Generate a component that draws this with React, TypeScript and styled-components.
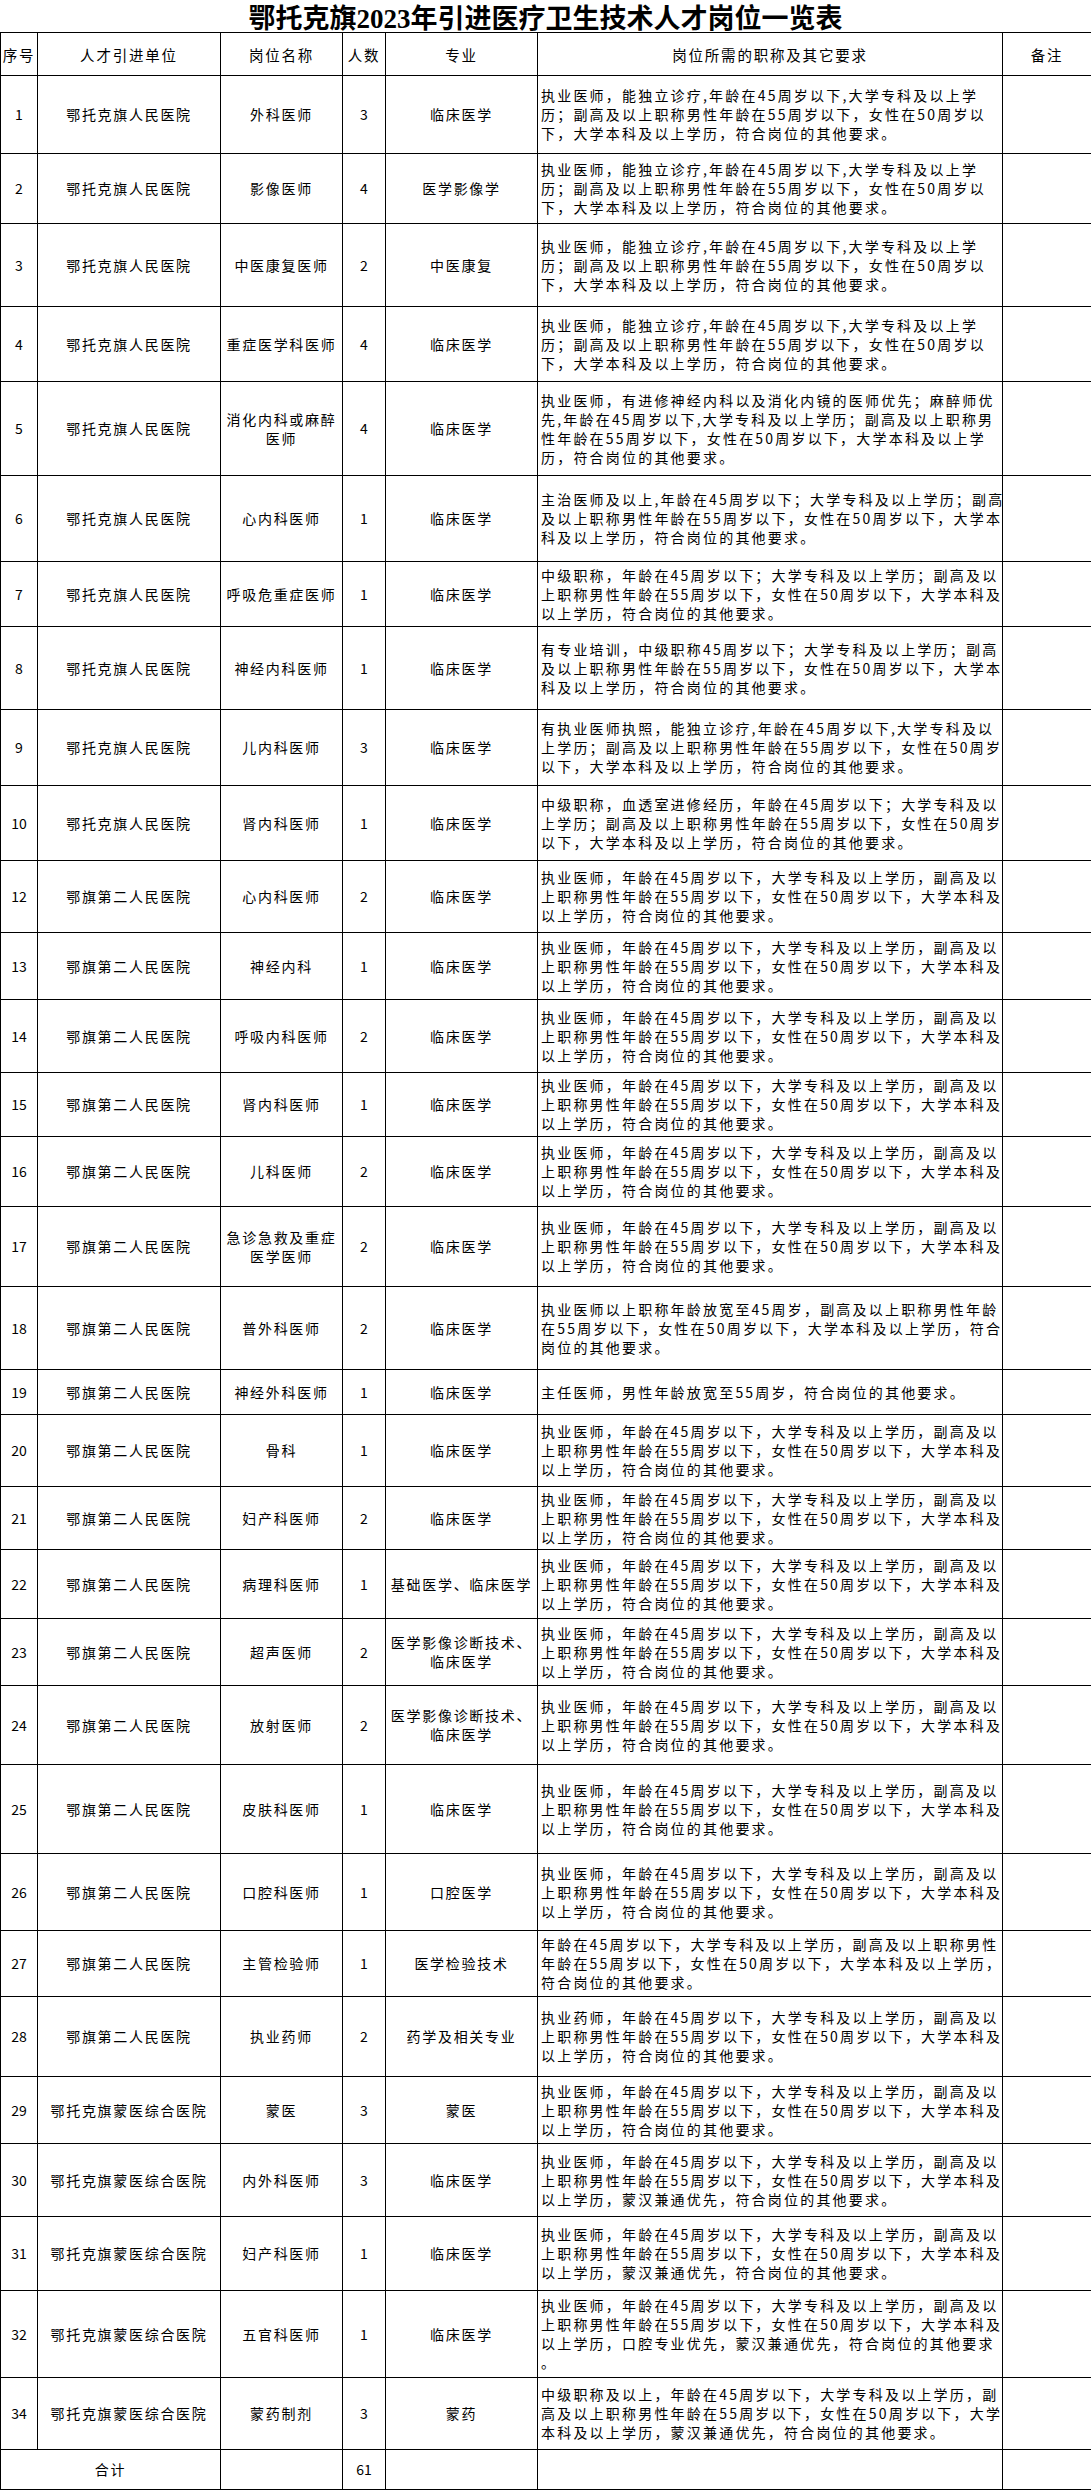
import styled, { createGlobalStyle } from 'styled-components';

const GlobalStyle = createGlobalStyle`
  * {
    box-sizing: border-box;
  }
  body {
    margin: 0;
    background: #fff;
    color: #000;
    font-family: "Noto Sans CJK SC", "Liberation Sans", sans-serif;
  }
`;

const COLS = '37px 183px 122px 43px 152px 465px 89px';

const Sheet = styled.div`
  width: 1091px;
`;

const Title = styled.h1`
  margin: 0;
  height: 33px;
  display: flex;
  align-items: center;
  justify-content: center;
  border-bottom: 1px solid #000;
  font-family: "Liberation Serif", "Noto Sans CJK SC", serif;
  font-size: 27px;
  font-weight: 700;
  letter-spacing: 0;
`;

const Row = styled.div<{ $h: number }>`
  display: grid;
  grid-template-columns: ${COLS};
  height: ${(p) => p.$h}px;
  border-left: 1px solid #000;
  border-bottom: 1px solid #000;
`;

const Cell = styled.div<{ $span?: number }>`
  grid-column: span ${(p) => p.$span ?? 1};
  display: flex;
  flex-direction: column;
  align-items: center;
  justify-content: center;
  border-right: 1px solid #000;
  font-size: 14px;
  letter-spacing: 1.7px;
  line-height: 19px;
  text-align: center;
  white-space: nowrap;
  overflow: hidden;
`;

const HeadCell = styled(Cell)`
  font-size: 14.5px;
  letter-spacing: 1.8px;
`;

const NumCell = styled(Cell)`
  letter-spacing: 0;
`;

const ReqCell = styled(Cell)`
  align-items: flex-start;
  padding-left: 3px;
  letter-spacing: 2.2px;
  text-align: left;
`;

const Line = styled.span`
  display: block;
`;

type Job = {
  no: string;
  unit: string;
  post: string[];
  count: string;
  major: string[];
  req: string[];
  h: number;
};

const U1 = '鄂托克旗人民医院';
const U2 = '鄂旗第二人民医院';
const U3 = '鄂托克旗蒙医综合医院';

const A = [
  '执业医师，能独立诊疗,年龄在45周岁以下,大学专科及以上学',
  '历；副高及以上职称男性年龄在55周岁以下，女性在50周岁以',
  '下，大学本科及以上学历，符合岗位的其他要求。',
];

const B1 = '执业医师，年龄在45周岁以下，大学专科及以上学历，副高及以';
const B2 = '上职称男性年龄在55周岁以下，女性在50周岁以下，大学本科及';
const B = [B1, B2, '以上学历，符合岗位的其他要求。'];
const M = [B1, B2, '以上学历，蒙汉兼通优先，符合岗位的其他要求。'];
const CL = ['临床医学'];

const jobs: Job[] = [
  { no: '1', unit: U1, post: ['外科医师'], count: '3', major: CL, req: A, h: 78 },
  { no: '2', unit: U1, post: ['影像医师'], count: '4', major: ['医学影像学'], req: A, h: 70 },
  { no: '3', unit: U1, post: ['中医康复医师'], count: '2', major: ['中医康复'], req: A, h: 83 },
  { no: '4', unit: U1, post: ['重症医学科医师'], count: '4', major: CL, req: A, h: 75 },
  {
    no: '5',
    unit: U1,
    post: ['消化内科或麻醉', '医师'],
    count: '4',
    major: CL,
    req: [
      '执业医师，有进修神经内科以及消化内镜的医师优先；麻醉师优',
      '先,年龄在45周岁以下,大学专科及以上学历；副高及以上职称男',
      '性年龄在55周岁以下，女性在50周岁以下，大学本科及以上学',
      '历，符合岗位的其他要求。',
    ],
    h: 94,
  },
  {
    no: '6',
    unit: U1,
    post: ['心内科医师'],
    count: '1',
    major: CL,
    req: [
      '主治医师及以上,年龄在45周岁以下；大学专科及以上学历；副高',
      '及以上职称男性年龄在55周岁以下，女性在50周岁以下，大学本',
      '科及以上学历，符合岗位的其他要求。',
    ],
    h: 86,
  },
  {
    no: '7',
    unit: U1,
    post: ['呼吸危重症医师'],
    count: '1',
    major: CL,
    req: [
      '中级职称，年龄在45周岁以下；大学专科及以上学历；副高及以',
      '上职称男性年龄在55周岁以下，女性在50周岁以下，大学本科及',
      '以上学历，符合岗位的其他要求。',
    ],
    h: 65,
  },
  {
    no: '8',
    unit: U1,
    post: ['神经内科医师'],
    count: '1',
    major: CL,
    req: [
      '有专业培训，中级职称45周岁以下；大学专科及以上学历；副高',
      '及以上职称男性年龄在55周岁以下，女性在50周岁以下，大学本',
      '科及以上学历，符合岗位的其他要求。',
    ],
    h: 83,
  },
  {
    no: '9',
    unit: U1,
    post: ['儿内科医师'],
    count: '3',
    major: CL,
    req: [
      '有执业医师执照，能独立诊疗,年龄在45周岁以下,大学专科及以',
      '上学历；副高及以上职称男性年龄在55周岁以下，女性在50周岁',
      '以下，大学本科及以上学历，符合岗位的其他要求。',
    ],
    h: 76,
  },
  {
    no: '10',
    unit: U1,
    post: ['肾内科医师'],
    count: '1',
    major: CL,
    req: [
      '中级职称，血透室进修经历，年龄在45周岁以下；大学专科及以',
      '上学历；副高及以上职称男性年龄在55周岁以下，女性在50周岁',
      '以下，大学本科及以上学历，符合岗位的其他要求。',
    ],
    h: 75,
  },
  { no: '12', unit: U2, post: ['心内科医师'], count: '2', major: CL, req: B, h: 72 },
  { no: '13', unit: U2, post: ['神经内科'], count: '1', major: CL, req: B, h: 67 },
  { no: '14', unit: U2, post: ['呼吸内科医师'], count: '2', major: CL, req: B, h: 73 },
  { no: '15', unit: U2, post: ['肾内科医师'], count: '1', major: CL, req: B, h: 64 },
  { no: '16', unit: U2, post: ['儿科医师'], count: '2', major: CL, req: B, h: 70 },
  { no: '17', unit: U2, post: ['急诊急救及重症', '医学医师'], count: '2', major: CL, req: B, h: 80 },
  {
    no: '18',
    unit: U2,
    post: ['普外科医师'],
    count: '2',
    major: CL,
    req: [
      '执业医师以上职称年龄放宽至45周岁，副高及以上职称男性年龄',
      '在55周岁以下，女性在50周岁以下，大学本科及以上学历，符合',
      '岗位的其他要求。',
    ],
    h: 83,
  },
  {
    no: '19',
    unit: U2,
    post: ['神经外科医师'],
    count: '1',
    major: CL,
    req: ['主任医师，男性年龄放宽至55周岁，符合岗位的其他要求。'],
    h: 45,
  },
  { no: '20', unit: U2, post: ['骨科'], count: '1', major: CL, req: B, h: 72 },
  { no: '21', unit: U2, post: ['妇产科医师'], count: '2', major: CL, req: B, h: 63 },
  { no: '22', unit: U2, post: ['病理科医师'], count: '1', major: ['基础医学、临床医学'], req: B, h: 69 },
  { no: '23', unit: U2, post: ['超声医师'], count: '2', major: ['医学影像诊断技术、', '临床医学'], req: B, h: 67 },
  { no: '24', unit: U2, post: ['放射医师'], count: '2', major: ['医学影像诊断技术、', '临床医学'], req: B, h: 79 },
  { no: '25', unit: U2, post: ['皮肤科医师'], count: '1', major: CL, req: B, h: 89 },
  { no: '26', unit: U2, post: ['口腔科医师'], count: '1', major: ['口腔医学'], req: B, h: 77 },
  {
    no: '27',
    unit: U2,
    post: ['主管检验师'],
    count: '1',
    major: ['医学检验技术'],
    req: [
      '年龄在45周岁以下，大学专科及以上学历，副高及以上职称男性',
      '年龄在55周岁以下，女性在50周岁以下，大学本科及以上学历，',
      '符合岗位的其他要求。',
    ],
    h: 66,
  },
  {
    no: '28',
    unit: U2,
    post: ['执业药师'],
    count: '2',
    major: ['药学及相关专业'],
    req: ['执业药师，年龄在45周岁以下，大学专科及以上学历，副高及以', B2, '以上学历，符合岗位的其他要求。'],
    h: 80,
  },
  { no: '29', unit: U3, post: ['蒙医'], count: '3', major: ['蒙医'], req: B, h: 67 },
  { no: '30', unit: U3, post: ['内外科医师'], count: '3', major: CL, req: M, h: 73 },
  { no: '31', unit: U3, post: ['妇产科医师'], count: '1', major: CL, req: M, h: 74 },
  {
    no: '32',
    unit: U3,
    post: ['五官科医师'],
    count: '1',
    major: CL,
    req: [B1, B2, '以上学历，口腔专业优先，蒙汉兼通优先，符合岗位的其他要求', '。'],
    h: 87,
  },
  {
    no: '34',
    unit: U3,
    post: ['蒙药制剂'],
    count: '3',
    major: ['蒙药'],
    req: [
      '中级职称及以上，年龄在45周岁以下，大学专科及以上学历，副',
      '高及以上职称男性年龄在55周岁以下，女性在50周岁以下，大学',
      '本科及以上学历，蒙汉兼通优先，符合岗位的其他要求。',
    ],
    h: 72,
  },
];

function Lines({ items }: { items: string[] }) {
  return (
    <>
      {items.map((t, i) => (
        <Line key={i}>{t}</Line>
      ))}
    </>
  );
}

function App() {
  return (
    <Sheet>
      <GlobalStyle />
      <Title>鄂托克旗2023年引进医疗卫生技术人才岗位一览表</Title>
      <Row $h={43}>
        <HeadCell>序号</HeadCell>
        <HeadCell>人才引进单位</HeadCell>
        <HeadCell>岗位名称</HeadCell>
        <HeadCell>人数</HeadCell>
        <HeadCell>专业</HeadCell>
        <HeadCell>岗位所需的职称及其它要求</HeadCell>
        <HeadCell>备注</HeadCell>
      </Row>
      {jobs.map((j) => (
        <Row key={j.no} $h={j.h}>
          <NumCell>{j.no}</NumCell>
          <Cell>{j.unit}</Cell>
          <Cell>
            <Lines items={j.post} />
          </Cell>
          <NumCell>{j.count}</NumCell>
          <Cell>
            <Lines items={j.major} />
          </Cell>
          <ReqCell>
            <Lines items={j.req} />
          </ReqCell>
          <Cell />
        </Row>
      ))}
      <Row $h={40}>
        <Cell $span={2}>合计</Cell>
        <Cell />
        <NumCell>61</NumCell>
        <Cell />
        <Cell />
        <Cell />
      </Row>
    </Sheet>
  );
}

export default App;
